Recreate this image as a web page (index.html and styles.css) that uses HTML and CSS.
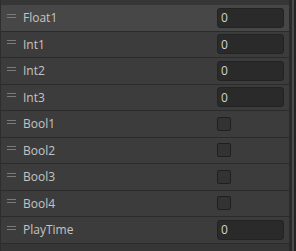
FILE: index.html
```html
<!DOCTYPE html>
<html lang="en">
<head>
    <meta charset="UTF-8">
    <meta name="viewport" content="width=device-width, initial-scale=1.0">
    <title>Parameters</title>
    <link rel="stylesheet" href="styles.css">
</head>
<body>
    <div class="panel">
        <div class="list">
            <div class="row selected">
                <span class="handle"></span>
                <span class="name">Float1</span>
                <input class="field" type="text" value="0">
            </div>
            <div class="row">
                <span class="handle"></span>
                <span class="name">Int1</span>
                <input class="field" type="text" value="0">
            </div>
            <div class="row">
                <span class="handle"></span>
                <span class="name">Int2</span>
                <input class="field" type="text" value="0">
            </div>
            <div class="row">
                <span class="handle"></span>
                <span class="name">Int3</span>
                <input class="field" type="text" value="0">
            </div>
            <div class="row">
                <span class="handle"></span>
                <span class="name">Bool1</span>
                <span class="check"></span>
            </div>
            <div class="row">
                <span class="handle"></span>
                <span class="name">Bool2</span>
                <span class="check"></span>
            </div>
            <div class="row">
                <span class="handle"></span>
                <span class="name">Bool3</span>
                <span class="check"></span>
            </div>
            <div class="row">
                <span class="handle"></span>
                <span class="name">Bool4</span>
                <span class="check"></span>
            </div>
            <div class="row">
                <span class="handle"></span>
                <span class="name">PlayTime</span>
                <input class="field" type="text" value="0">
            </div>
        </div>
        <div class="scrollbar"></div>
    </div>
</body>
</html>
```

FILE: styles.css
```css
body {
    margin: 0;
    background-color: #363636;
    font-family: "Open Sans", sans-serif;
    font-size: 12px;
}
.panel {
    display: flex;
    width: 296px;
    height: 251px;
    background-color: #363636;
}
.list {
    flex: 1;
    padding-top: 5px;
    border-left: 1px solid #2e2e2e;
}
.row {
    display: flex;
    align-items: center;
    height: 25.5px;
    border-bottom: 1px solid #2b2b2b;
    background-color: #3c3c3c;
    padding-right: 5px;
}
.row.selected {
    background-color: #474747;
}
.handle {
    width: 9px;
    height: 4px;
    margin-left: 6px;
    margin-bottom: 4px;
    border-top: 1px solid #7a7a7a;
    border-bottom: 1px solid #7a7a7a;
    box-sizing: border-box;
}
.name {
    flex: 1;
    margin-left: 7px;
    color: #c4c4c4;
}
.field {
    width: 67px;
    height: 20px;
    box-sizing: border-box;
    margin: 0;
    padding: 0 0 0 3px;
    background-color: #2a2a2a;
    border: 1px solid #232323;
    border-radius: 3px;
    color: #d2d2d2;
    font-family: "Open Sans", sans-serif;
    font-size: 12px;
}
.check {
    width: 14px;
    height: 14px;
    box-sizing: border-box;
    margin-right: 53px;
    background-color: #333333;
    border: 1px solid #1f1f1f;
    border-radius: 2px;
}
.scrollbar {
    width: 7px;
    box-sizing: border-box;
    border-left: 3px solid #2a2a2a;
    border-right: 2px solid #232323;
    background-color: #4a4a4a;
}
```
